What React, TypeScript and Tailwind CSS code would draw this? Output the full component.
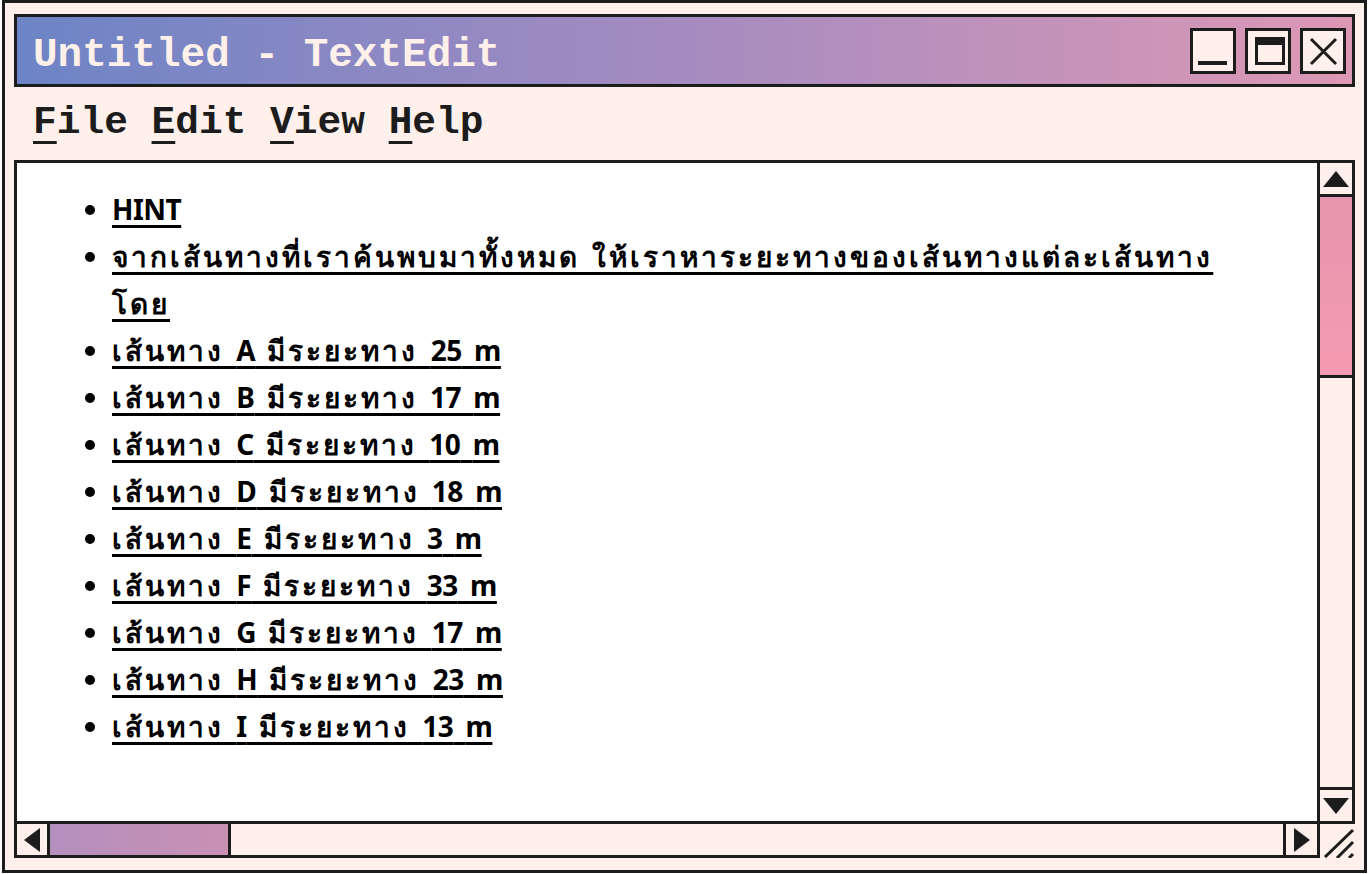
import React from "react";

const items = [
  "HINT",
  "จากเส้นทางที่เราค้นพบมาทั้งหมด ให้เราหาระยะทางของเส้นทางแต่ละเส้นทางโดย",
  "เส้นทาง A มีระยะทาง 25 m",
  "เส้นทาง B มีระยะทาง 17 m",
  "เส้นทาง C มีระยะทาง 10 m",
  "เส้นทาง D มีระยะทาง 18 m",
  "เส้นทาง E มีระยะทาง 3 m",
  "เส้นทาง F มีระยะทาง 33 m",
  "เส้นทาง G มีระยะทาง 17 m",
  "เส้นทาง H มีระยะทาง 23 m",
  "เส้นทาง I มีระยะทาง 13 m",
];

function Btn({ children }: { children: React.ReactNode }) {
  return (
    <div className="w-[46px] h-[46px] border-[3px] border-[#1c1c1c] bg-[#fff0eb] flex items-center justify-center">
      {children}
    </div>
  );
}

function MenuItem({ first, rest }: { first: string; rest: string }) {
  return (
    <span>
      <span className="underline decoration-[3px] underline-offset-[8px]">{first}</span>
      {rest}
    </span>
  );
}

function Line({ text }: { text: string }) {
  const parts = text.split(/([A-Za-z0-9]+)/);
  return (
    <span className="underline decoration-[3px] underline-offset-[5px]">
      {parts.map((p, i) =>
        /^[A-Za-z0-9]+$/.test(p) ? (
          <span key={i} className="tracking-[-0.5px]">
            {p}
          </span>
        ) : (
          <span key={i}>{p}</span>
        )
      )}
    </span>
  );
}

export default function App() {
  return (
    <div className="w-[1369px] h-[874px] bg-white pl-[2px]">
      <div className="w-[1365px] h-[873px] border-[3px] border-[#1c1c1c] bg-[#fff0eb] flex flex-col pt-[11px] px-[9px] pb-[12px]">
        {/* title bar */}
        <div className="h-[73px] shrink-0 border-[3px] border-[#1c1c1c] bg-gradient-to-r from-[#6c84c6] via-[#a58bc0] to-[#dd98b4] flex items-center justify-between pl-[16px] pr-[6px]">
          <div
            className="text-[41px] font-bold text-[#fff0ea] leading-none pt-[10px]"
            style={{ fontFamily: "'Liberation Mono', 'Courier New', monospace" }}
          >
            Untitled - TextEdit
          </div>
          <div className="flex gap-[9px]">
            <Btn>
              <svg width="40" height="40" viewBox="0 0 40 40">
                <rect x="5" y="30" width="29" height="4" fill="#1c1c1c" />
              </svg>
            </Btn>
            <Btn>
              <svg width="40" height="40" viewBox="0 0 40 40">
                <rect x="8.5" y="7.5" width="27" height="25" fill="none" stroke="#1c1c1c" strokeWidth="3" />
                <rect x="7" y="6" width="30" height="8" fill="#1c1c1c" />
              </svg>
            </Btn>
            <Btn>
              <svg width="40" height="40" viewBox="0 0 40 40">
                <path d="M8 8 L33 33 M33 8 L8 33" stroke="#1c1c1c" strokeWidth="3" />
              </svg>
            </Btn>
          </div>
        </div>

        {/* menu */}
        <div
          className="h-[73px] shrink-0 pl-[19px] pt-[16px] text-[39.5px] font-bold leading-none text-[#1c1c1c] whitespace-pre"
          style={{ fontFamily: "'Liberation Mono', 'Courier New', monospace" }}
        >
          <MenuItem first="F" rest="ile " />
          <MenuItem first="E" rest="dit " />
          <MenuItem first="V" rest="iew " />
          <MenuItem first="H" rest="elp" />
        </div>

        {/* content */}
        <div className="flex-1 grid grid-cols-[1fr_38px] grid-rows-[664px_1fr]">
          <div className="bg-white border-t-[3px] border-l-[3px] border-b-[3px] border-[#1c1c1c] overflow-hidden pt-[23px] pr-[60px]">
            <ul
              className="list-disc pl-[95px] text-[28px] font-bold leading-[47px] tracking-[3px] [word-spacing:2px] text-black"
              style={{ fontFamily: "'Noto Sans', sans-serif" }}
            >
              {items.map((t, i) => (
                <li key={i}>
                  <Line text={t} />
                </li>
              ))}
            </ul>
          </div>
          {/* vertical scrollbar */}
          <div className="border-[3px] border-[#1c1c1c] bg-[#fff0eb] flex flex-col">
            <div className="h-[34px] shrink-0 border-b-[3px] border-[#1c1c1c] flex items-center justify-center">
              <svg width="28" height="18" viewBox="0 0 28 18">
                <path d="M14 1 L27 17 L1 17 Z" fill="#1c1c1c" />
              </svg>
            </div>
            <div className="h-[181px] shrink-0 border-b-[3px] border-[#1c1c1c] bg-gradient-to-b from-[#e595ae] to-[#f59bb0]" />
            <div className="flex-1" />
            <div className="h-[34px] shrink-0 border-t-[3px] border-[#1c1c1c] flex items-center justify-center">
              <svg width="28" height="18" viewBox="0 0 28 18">
                <path d="M1 1 L27 1 L14 17 Z" fill="#1c1c1c" />
              </svg>
            </div>
          </div>
          {/* horizontal scrollbar */}
          <div className="w-[calc(100%+3px)] border-l-[3px] border-r-[3px] border-b-[3px] border-[#1c1c1c] bg-[#fff0eb] flex">
            <div className="w-[33px] shrink-0 border-r-[3px] border-[#1c1c1c] flex items-center justify-center">
              <svg width="18" height="26" viewBox="0 0 18 26">
                <path d="M1 13 L17 1 L17 25 Z" fill="#1c1c1c" />
              </svg>
            </div>
            <div className="w-[181px] shrink-0 border-r-[3px] border-[#1c1c1c] bg-gradient-to-r from-[#b48fbe] to-[#c990b4]" />
            <div className="flex-1" />
            <div className="w-[34px] shrink-0 border-l-[3px] border-[#1c1c1c] flex items-center justify-center">
              <svg width="18" height="26" viewBox="0 0 18 26">
                <path d="M1 1 L17 13 L1 25 Z" fill="#1c1c1c" />
              </svg>
            </div>
          </div>
          {/* grip */}
          <div className="flex items-end justify-end">
            <svg width="38" height="34" viewBox="0 0 38 34">
              <path d="M8 33 L36 6 M20 34 L36 18 M32 34 L36 30" stroke="#1c1c1c" strokeWidth="3" />
            </svg>
          </div>
        </div>
      </div>
    </div>
  );
}
